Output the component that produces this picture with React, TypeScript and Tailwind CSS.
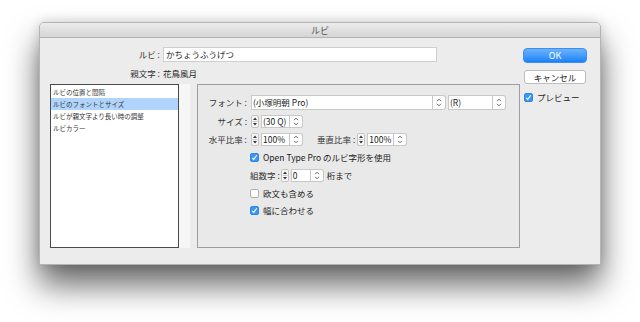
import React from "react";

const font = { fontFamily: '"Noto Sans CJK JP", "Noto Sans", sans-serif' };

function Chevrons() {
  return (
    <svg width="6" height="9" viewBox="0 0 6 9" fill="none" stroke="#555" strokeWidth="0.9">
      <path d="M1 3.2 L3 1.2 L5 3.2" />
      <path d="M1 5.8 L3 7.8 L5 5.8" />
    </svg>
  );
}

function StepArrows() {
  return (
    <div className="w-[8px] h-[13px] flex flex-col items-center justify-center rounded-[2px] border border-[#c4c4c4] bg-[#f7f7f7]">
      <svg width="6" height="11" viewBox="0 0 6 11">
        <path d="M3 1.5 L5 4 L1 4 Z" fill="#333" />
        <line x1="0.5" y1="5.5" x2="5.5" y2="5.5" stroke="#aaa" strokeWidth="0.6" />
        <path d="M3 9.5 L5 7 L1 7 Z" fill="#333" />
      </svg>
    </div>
  );
}

function NumField({ value, w }: { value: string; w: string }) {
  return (
    <div className="flex items-center h-[13px]">
      <StepArrows />
      <div className={`ml-[2px] h-[13px] ${w} bg-white border border-[#c8c8c8] flex items-center pl-[1px] text-[8.5px] text-[#222] leading-none`}>
        {value}
      </div>
      <div className="h-[13px] w-[13px] bg-white border border-l-0 border-[#c8c8c8] rounded-r-[3px] flex items-center justify-center">
        <Chevrons />
      </div>
    </div>
  );
}

function Check({ checked }: { checked: boolean }) {
  return checked ? (
    <div className="w-[9px] h-[9px] rounded-[2px] bg-[#3a97f8] border border-[#2f86e6] flex items-center justify-center">
      <svg width="7" height="7" viewBox="0 0 7 7" fill="none" stroke="white" strokeWidth="1.1">
        <path d="M1.2 3.8 L2.8 5.4 L5.8 1.2" />
      </svg>
    </div>
  ) : (
    <div className="w-[9px] h-[9px] rounded-[2px] bg-white border border-[#b0b0b0]" />
  );
}

export default function App() {
  return (
    <div className="w-[640px] h-[322px] bg-white overflow-hidden pt-[22px] pl-[39px]" style={font}>
      <div className="w-[562px] h-[243px] flex flex-col rounded-t-[5px] border border-[#b4b4b4] bg-[#ececec] shadow-[0_20px_32px_rgba(0,0,0,0.6),0_0_12px_rgba(0,0,0,0.15)] overflow-hidden">
        <div className="h-[15px] shrink-0 flex items-center justify-center border-b border-[#b2b2b2] bg-gradient-to-b from-[#ececec] to-[#d5d5d5] text-[9px] text-[#555] leading-none">
          ルビ
        </div>
        <div className="flex-1 flex text-[#222]">
          {/* main column */}
          <div className="ml-[10px] w-[470px] flex flex-col">
            <div className="mt-[9px] flex items-center h-[15px]">
              <div className="w-[110px] text-right text-[8.5px] leading-none text-[#333]">ルビ :</div>
              <div className="ml-[3px] w-[274px] h-[15px] bg-white border border-[#cfcfcf] flex items-center pl-[2px] text-[8.5px] leading-none">
                かちょうふうげつ
              </div>
            </div>
            <div className="mt-[6px] flex items-center h-[10px]">
              <div className="w-[110px] text-right text-[8.5px] leading-none text-[#333]">親文字 :</div>
              <div className="ml-[3px] text-[8.5px] leading-none">花鳥風月</div>
            </div>
            <div className="mt-[6px] flex h-[164px]">
              <div className="w-[129px] h-full bg-white border border-[#4a4a4a] flex flex-col pt-[1px] text-[6.5px] leading-none text-[#333]">
                <div className="h-[12px] flex items-center pl-[2px]">ルビの位置と間隔</div>
                <div className="h-[12px] flex items-center pl-[2px] bg-[#b0d4fc]">ルビのフォントとサイズ</div>
                <div className="h-[12px] flex items-center pl-[2px]">ルビが親文字より長い時の調整</div>
                <div className="h-[12px] flex items-center pl-[2px]">ルビカラー</div>
              </div>
              <div className="w-[11px] h-full bg-[#f6f6f6]" />
              <div className="ml-[7px] w-[323px] h-full border border-[#9e9e9e] bg-[#e9e9e9] flex flex-col text-[8.5px] leading-none">
                {/* font row */}
                <div className="mt-[10px] flex items-center h-[15px]">
                  <div className="w-[49px] text-right text-[#333]">フォント :</div>
                  <div className="ml-[4px] w-[182px] h-[15px] bg-white border border-[#c8c8c8] flex items-center pl-[1px]">(小塚明朝 Pro)</div>
                  <div className="w-[13px] h-[15px] bg-white border border-l-0 border-[#c8c8c8] rounded-r-[3px] flex items-center justify-center">
                    <Chevrons />
                  </div>
                  <div className="ml-[2px] w-[45px] h-[15px] bg-white border border-[#c8c8c8] flex items-center pl-[1px]">(R)</div>
                  <div className="w-[13px] h-[15px] bg-white border border-l-0 border-[#c8c8c8] rounded-r-[3px] flex items-center justify-center">
                    <Chevrons />
                  </div>
                </div>
                {/* size */}
                <div className="mt-[5px] flex items-center h-[13px]">
                  <div className="w-[49px] text-right text-[#333]">サイズ :</div>
                  <div className="ml-[4px]">
                    <NumField value="(30 Q)" w="w-[29px]" />
                  </div>
                </div>
                {/* ratios */}
                <div className="mt-[5px] flex items-center h-[13px]">
                  <div className="w-[49px] text-right text-[#333]">水平比率 :</div>
                  <div className="ml-[4px]">
                    <NumField value="100%" w="w-[29px]" />
                  </div>
                  <div className="ml-[14px] text-[#333]">垂直比率 :</div>
                  <div className="ml-[2px]">
                    <NumField value="100%" w="w-[27px]" />
                  </div>
                </div>
                <div className="mt-[7px] flex items-center h-[9px] pl-[52px]">
                  <Check checked />
                  <span className="ml-[4px]">Open Type Pro のルビ字形を使用</span>
                </div>
                <div className="mt-[7px] flex items-center h-[13px] pl-[52px]">
                  <span className="text-[#333]">組数字 :</span>
                  <div className="ml-[1px]">
                    <NumField value="0" w="w-[20px]" />
                  </div>
                  <span className="ml-[3px]">桁まで</span>
                </div>
                <div className="mt-[7px] flex items-center h-[9px] pl-[52px]">
                  <Check checked={false} />
                  <span className="ml-[4px]">欧文も含める</span>
                </div>
                <div className="mt-[8px] flex items-center h-[9px] pl-[52px]">
                  <Check checked />
                  <span className="ml-[4px]">幅に合わせる</span>
                </div>
              </div>
            </div>
          </div>
          {/* buttons column */}
          <div className="ml-[3px] w-[64px] flex flex-col">
            <div className="mt-[10px] h-[15px] rounded-[4px] bg-gradient-to-b from-[#6bb3fb] to-[#1681fa] border border-[#3d8ef0] flex items-center justify-center text-white text-[9px] leading-none">
              OK
            </div>
            <div className="mt-[7px] ml-[1px] w-[62px] h-[14px] rounded-[3px] bg-white border border-[#bdbdbd] flex items-center justify-center text-[8.5px] leading-none">
              キャンセル
            </div>
            <div className="mt-[9px] ml-[1px] flex items-center h-[9px] text-[8.5px] leading-none">
              <Check checked />
              <span className="ml-[4px]">プレビュー</span>
            </div>
          </div>
        </div>
      </div>
    </div>
  );
}
